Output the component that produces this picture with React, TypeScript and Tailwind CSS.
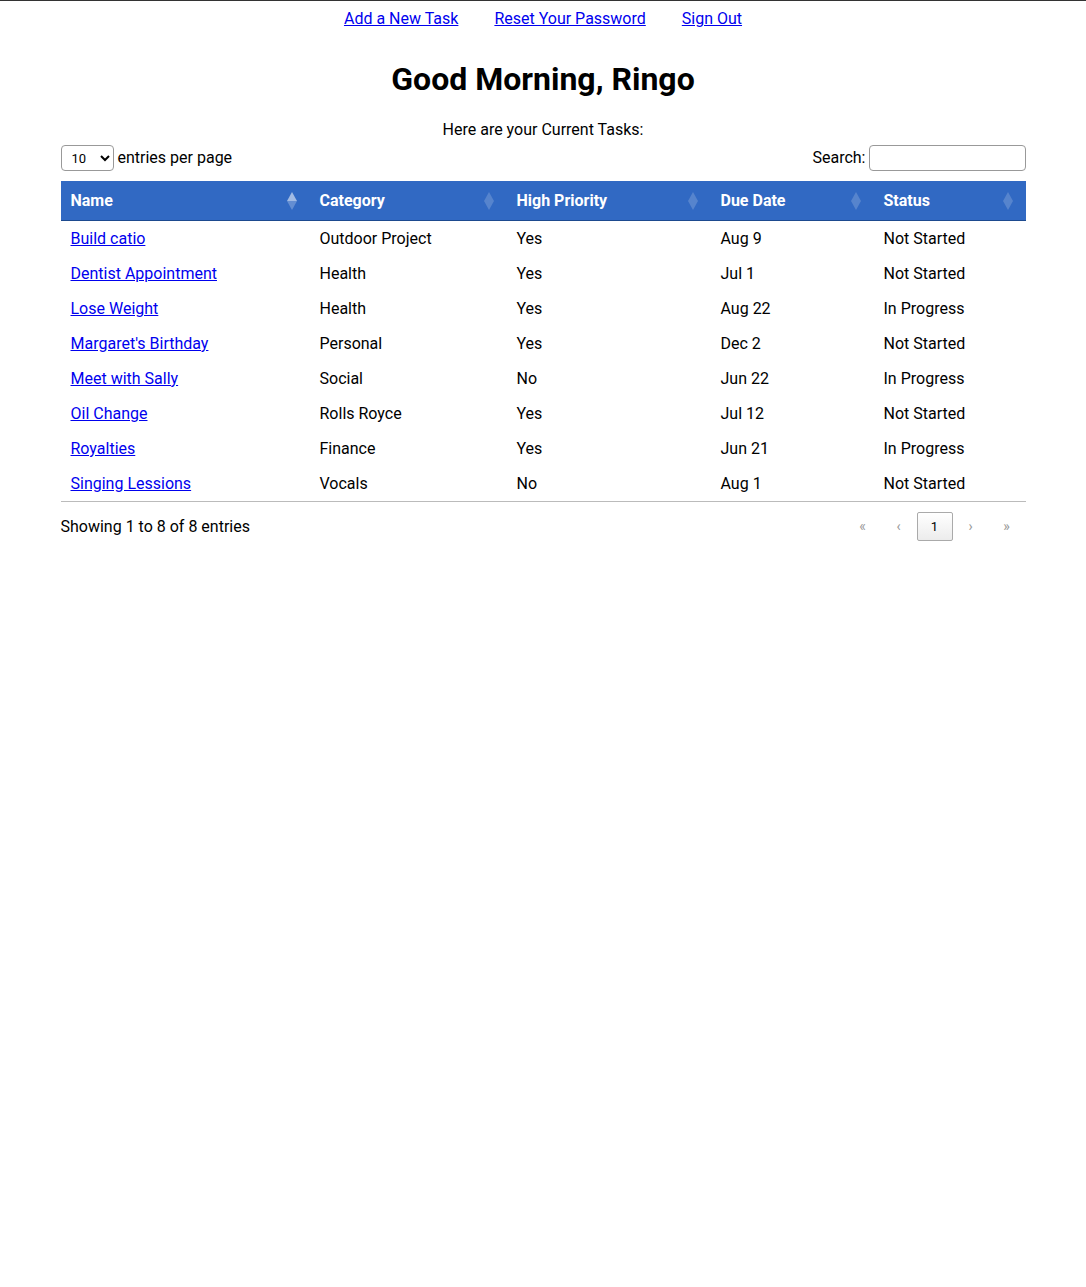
import React from "react";

type Task = {
  name: string;
  category: string;
  priority: string;
  due: string;
  status: string;
};

const tasks: Task[] = [
  { name: "Build catio", category: "Outdoor Project", priority: "Yes", due: "Aug 9", status: "Not Started" },
  { name: "Dentist Appointment", category: "Health", priority: "Yes", due: "Jul 1", status: "Not Started" },
  { name: "Lose Weight", category: "Health", priority: "Yes", due: "Aug 22", status: "In Progress" },
  { name: "Margaret's Birthday", category: "Personal", priority: "Yes", due: "Dec 2", status: "Not Started" },
  { name: "Meet with Sally", category: "Social", priority: "No", due: "Jun 22", status: "In Progress" },
  { name: "Oil Change", category: "Rolls Royce", priority: "Yes", due: "Jul 12", status: "Not Started" },
  { name: "Royalties", category: "Finance", priority: "Yes", due: "Jun 21", status: "In Progress" },
  { name: "Singing Lessions", category: "Vocals", priority: "No", due: "Aug 1", status: "Not Started" },
];

// datatables-style diamond sort marker
function SortIcon({ active }: { active?: boolean }) {
  return (
    <svg
      width="10"
      height="18"
      viewBox="0 0 10 18"
      className="absolute right-[13px] top-1/2 -translate-y-1/2"
    >
      <polygon points="5,0 10,9 0,9" fill="white" opacity={active ? 0.55 : 0.18} />
      <polygon points="0,9 10,9 5,18" fill="white" opacity={active ? 0.25 : 0.18} />
    </svg>
  );
}

const cols = [
  { label: "Name", w: "w-[249px]", active: true },
  { label: "Category", w: "w-[197px]" },
  { label: "High Priority", w: "w-[204px]" },
  { label: "Due Date", w: "w-[163px]" },
  { label: "Status", w: "w-[152px]" },
];

export default function App() {
  return (
    <div className="min-h-[1287px] bg-white border-t border-[#333] text-black font-['Roboto',sans-serif] text-base">
      <nav className="flex justify-center pt-[8px] leading-[19px]">
        <a href="#" className="mx-[18px] text-[#0000ee] underline">Add a New Task</a>
        <a href="#" className="mx-[18px] text-[#0000ee] underline">Reset Your Password</a>
        <a href="#" className="mx-[18px] text-[#0000ee] underline">Sign Out</a>
      </nav>

      <h1 className="text-center text-[32px] font-bold leading-[37px] mt-[33px]">Good Morning, Ringo</h1>

      <p className="text-center mt-[22px] leading-[19px]">Here are your Current Tasks:</p>

      <div className="w-[965px] mx-auto">
        <div className="flex items-center justify-between mt-[6px]">
          <label className="flex items-center gap-[4px]">
            <select className="w-[53px] h-[26px] border border-[#999] rounded-[4px] text-[13px] pl-[6px] bg-white">
              <option>10</option>
              <option>25</option>
            </select>
            <span>entries per page</span>
          </label>
          <label className="flex items-center gap-[3px]">
            <span>Search:</span>
            <input type="text" className="w-[157px] h-[26px] border border-[#999] rounded-[4px] bg-white" />
          </label>
        </div>

        <table className="w-full border-collapse mt-[10px]">
          <thead>
            <tr className="bg-[#3169c3] text-white border-b border-[#1d4a8f]">
              {cols.map((c) => (
                <th key={c.label} className={`${c.w} relative text-left font-bold px-[10px] py-[10px] leading-[19px]`}>
                  {c.label}
                  <SortIcon active={c.active} />
                </th>
              ))}
            </tr>
          </thead>
          <tbody className="border-b border-[#bbb]">
            {tasks.map((t) => (
              <tr key={t.name}>
                <td className="px-[10px] py-[8px] leading-[19px]">
                  <a href="#" className="text-[#0000ee] underline">{t.name}</a>
                </td>
                <td className="px-[10px] py-[8px] leading-[19px]">{t.category}</td>
                <td className="px-[10px] py-[8px] leading-[19px]">{t.priority}</td>
                <td className="px-[10px] py-[8px] leading-[19px]">{t.due}</td>
                <td className="px-[10px] py-[8px] leading-[19px]">{t.status}</td>
              </tr>
            ))}
          </tbody>
        </table>

        <div className="flex items-center justify-between mt-[10px]">
          <span>Showing 1 to 8 of 8 entries</span>
          <div className="flex items-center mr-[1px]">
            <span className="w-[36px] h-[29px] flex items-center justify-center text-[14px] text-[#999]">«</span>
            <span className="w-[36px] h-[29px] flex items-center justify-center text-[14px] text-[#999]">‹</span>
            <span className="w-[36px] h-[29px] flex items-center justify-center text-[13px] border border-[#aaa] rounded-[2px] bg-gradient-to-b from-white to-[#ececec]">1</span>
            <span className="w-[36px] h-[29px] flex items-center justify-center text-[14px] text-[#999]">›</span>
            <span className="w-[36px] h-[29px] flex items-center justify-center text-[14px] text-[#999]">»</span>
          </div>
        </div>
      </div>
    </div>
  );
}
